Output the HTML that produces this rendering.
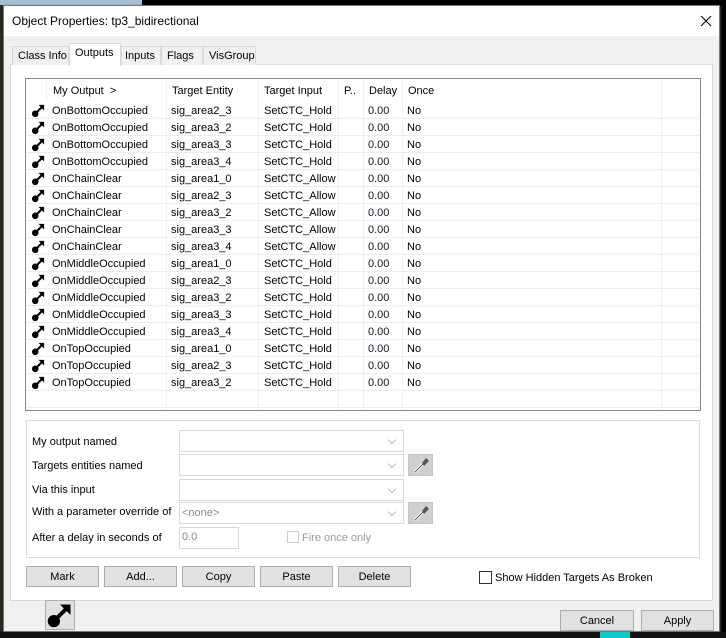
<!DOCTYPE html>
<html><head><meta charset="utf-8"><style>
*{box-sizing:border-box;margin:0;padding:0}
body{width:726px;height:638px;overflow:hidden;background:#000;position:relative;font-family:"Liberation Sans",sans-serif;font-size:11px;color:#000}
.a{position:absolute}
.t{position:absolute;white-space:nowrap}
.btn{position:absolute;background:#e1e1e1;border:1px solid #adadad;text-align:center;line-height:20px;font-size:11px}
.combo{position:absolute;left:179px;width:225px;height:22px;border:1px solid #d9d9d9;background:#fff}
.combo:after{content:"";position:absolute;right:8px;top:6px;width:5px;height:5px;border-right:1px solid #bbb;border-bottom:1px solid #bbb;transform:rotate(45deg)}
.row{position:absolute;left:26px;width:673px;height:17px;border-bottom:1px solid #ececec}
.row span{position:absolute;top:3px;white-space:nowrap}
.row .c1{left:26px}.row .c2{left:145px}.row .c3{left:238px}.row .c5{left:342px;color:#141428}.row .c6{left:381px}
.row svg{position:absolute;left:5px;top:1px}
.vl{position:absolute;width:1px;background:#f0f0f0}
</style></head><body>
<div class="a" style="left:0;top:0;width:142px;height:5px;background:#a6bfd2"></div>
<div class="a" style="left:0;top:5px;width:3px;height:633px;background:#2a2a20"></div>
<div class="a" style="left:3px;top:5px;width:717px;height:627px;background:#f0f0f0;border:1px solid #777;box-shadow:1px 1px 2px #333"></div>
<div class="a" style="left:4px;top:6px;width:715px;height:30px;background:#fff"></div>
<div class="t" style="left:12px;top:14px;font-size:12px">Object Properties: tp3_bidirectional</div>
<svg class="a" style="left:700px;top:15px" width="12" height="12"><path d="M1 1 L11 11 M11 1 L1 11" stroke="#000" stroke-width="1"/></svg>
<div class="a" style="left:10px;top:64px;width:703px;height:537px;background:#fff;border:1px solid #d9d9d9"></div>
<div class="a" style="left:12px;top:46px;width:57px;height:19px;border:1px solid #d9d9d9;border-bottom:none;background:#f0f0f0"></div><div class="t" style="left:18px;top:50px">Class Info</div>
<div class="a" style="left:69px;top:43px;width:52px;height:23px;border:1px solid #d9d9d9;border-bottom:none;background:#fff"></div><div class="t" style="left:75px;top:47px">Outputs</div>
<div class="a" style="left:121px;top:46px;width:40px;height:19px;border:1px solid #d9d9d9;border-bottom:none;background:#f0f0f0"></div><div class="t" style="left:125px;top:50px">Inputs</div>
<div class="a" style="left:161px;top:46px;width:42px;height:19px;border:1px solid #d9d9d9;border-bottom:none;background:#f0f0f0"></div><div class="t" style="left:167px;top:50px">Flags</div>
<div class="a" style="left:203px;top:46px;width:53px;height:19px;border:1px solid #d9d9d9;border-bottom:none;background:#f0f0f0"></div><div class="t" style="left:209px;top:50px">VisGroup</div>
<div class="a" style="left:25px;top:78px;width:676px;height:333px;border:1px solid #828790;background:#fff"></div>
<div class="vl" style="left:46px;top:80px;height:21px"></div>
<div class="vl" style="left:166px;top:80px;height:330px"></div>
<div class="vl" style="left:258px;top:80px;height:330px"></div>
<div class="vl" style="left:338px;top:80px;height:330px"></div>
<div class="vl" style="left:363px;top:80px;height:330px"></div>
<div class="vl" style="left:402px;top:80px;height:330px"></div>
<div class="vl" style="left:661px;top:80px;height:330px"></div>
<div class="t" style="left:53px;top:85px">My Output &nbsp;&gt;</div>
<div class="t" style="left:172px;top:85px">Target Entity</div>
<div class="t" style="left:264px;top:85px">Target Input</div>
<div class="t" style="left:344px;top:85px">P..</div>
<div class="t" style="left:369px;top:85px">Delay</div>
<div class="t" style="left:408px;top:85px">Once</div>
<svg width="0" height="0" style="position:absolute"><defs><symbol id="ic" viewBox="0 0 16 16"><circle cx="4.5" cy="11.5" r="3.5" fill="#000"/><path d="M5 11 L12 4" stroke="#000" stroke-width="2.2"/><path d="M8 2 H14 V8 Z" fill="#000"/></symbol></defs></svg>
<div class="row" style="top:102px"><svg width="15" height="15"><use href="#ic"/></svg><span class="c1">OnBottomOccupied</span><span class="c2">sig_area2_3</span><span class="c3">SetCTC_Hold</span><span class="c5">0.00</span><span class="c6">No</span></div>
<div class="row" style="top:119px"><svg width="15" height="15"><use href="#ic"/></svg><span class="c1">OnBottomOccupied</span><span class="c2">sig_area3_2</span><span class="c3">SetCTC_Hold</span><span class="c5">0.00</span><span class="c6">No</span></div>
<div class="row" style="top:136px"><svg width="15" height="15"><use href="#ic"/></svg><span class="c1">OnBottomOccupied</span><span class="c2">sig_area3_3</span><span class="c3">SetCTC_Hold</span><span class="c5">0.00</span><span class="c6">No</span></div>
<div class="row" style="top:153px"><svg width="15" height="15"><use href="#ic"/></svg><span class="c1">OnBottomOccupied</span><span class="c2">sig_area3_4</span><span class="c3">SetCTC_Hold</span><span class="c5">0.00</span><span class="c6">No</span></div>
<div class="row" style="top:170px"><svg width="15" height="15"><use href="#ic"/></svg><span class="c1">OnChainClear</span><span class="c2">sig_area1_0</span><span class="c3">SetCTC_Allow</span><span class="c5">0.00</span><span class="c6">No</span></div>
<div class="row" style="top:187px"><svg width="15" height="15"><use href="#ic"/></svg><span class="c1">OnChainClear</span><span class="c2">sig_area2_3</span><span class="c3">SetCTC_Allow</span><span class="c5">0.00</span><span class="c6">No</span></div>
<div class="row" style="top:204px"><svg width="15" height="15"><use href="#ic"/></svg><span class="c1">OnChainClear</span><span class="c2">sig_area3_2</span><span class="c3">SetCTC_Allow</span><span class="c5">0.00</span><span class="c6">No</span></div>
<div class="row" style="top:221px"><svg width="15" height="15"><use href="#ic"/></svg><span class="c1">OnChainClear</span><span class="c2">sig_area3_3</span><span class="c3">SetCTC_Allow</span><span class="c5">0.00</span><span class="c6">No</span></div>
<div class="row" style="top:238px"><svg width="15" height="15"><use href="#ic"/></svg><span class="c1">OnChainClear</span><span class="c2">sig_area3_4</span><span class="c3">SetCTC_Allow</span><span class="c5">0.00</span><span class="c6">No</span></div>
<div class="row" style="top:255px"><svg width="15" height="15"><use href="#ic"/></svg><span class="c1">OnMiddleOccupied</span><span class="c2">sig_area1_0</span><span class="c3">SetCTC_Hold</span><span class="c5">0.00</span><span class="c6">No</span></div>
<div class="row" style="top:272px"><svg width="15" height="15"><use href="#ic"/></svg><span class="c1">OnMiddleOccupied</span><span class="c2">sig_area2_3</span><span class="c3">SetCTC_Hold</span><span class="c5">0.00</span><span class="c6">No</span></div>
<div class="row" style="top:289px"><svg width="15" height="15"><use href="#ic"/></svg><span class="c1">OnMiddleOccupied</span><span class="c2">sig_area3_2</span><span class="c3">SetCTC_Hold</span><span class="c5">0.00</span><span class="c6">No</span></div>
<div class="row" style="top:306px"><svg width="15" height="15"><use href="#ic"/></svg><span class="c1">OnMiddleOccupied</span><span class="c2">sig_area3_3</span><span class="c3">SetCTC_Hold</span><span class="c5">0.00</span><span class="c6">No</span></div>
<div class="row" style="top:323px"><svg width="15" height="15"><use href="#ic"/></svg><span class="c1">OnMiddleOccupied</span><span class="c2">sig_area3_4</span><span class="c3">SetCTC_Hold</span><span class="c5">0.00</span><span class="c6">No</span></div>
<div class="row" style="top:340px"><svg width="15" height="15"><use href="#ic"/></svg><span class="c1">OnTopOccupied</span><span class="c2">sig_area1_0</span><span class="c3">SetCTC_Hold</span><span class="c5">0.00</span><span class="c6">No</span></div>
<div class="row" style="top:357px"><svg width="15" height="15"><use href="#ic"/></svg><span class="c1">OnTopOccupied</span><span class="c2">sig_area2_3</span><span class="c3">SetCTC_Hold</span><span class="c5">0.00</span><span class="c6">No</span></div>
<div class="row" style="top:374px"><svg width="15" height="15"><use href="#ic"/></svg><span class="c1">OnTopOccupied</span><span class="c2">sig_area3_2</span><span class="c3">SetCTC_Hold</span><span class="c5">0.00</span><span class="c6">No</span></div>
<div class="row" style="top:391px"></div>
<div class="a" style="left:26px;top:420px;width:674px;height:138px;border:1px solid #dcdcdc"></div>
<div class="t" style="left:32px;top:436px">My output named</div>
<div class="t" style="left:32px;top:460px">Targets entities named</div>
<div class="t" style="left:32px;top:484px">Via this input</div>
<div class="t" style="left:32px;top:506px">With a parameter override of</div>
<div class="t" style="left:32px;top:532px">After a delay in seconds of</div>
<div class="combo" style="top:430px"></div>
<div class="combo" style="top:454px"></div>
<div class="combo" style="top:479px"></div>
<div class="combo" style="top:502px"><span class="t" style="left:2px;top:4px;color:#888">&lt;none&gt;</span></div>
<svg class="a" style="left:408px;top:454px" width="25" height="22"><rect x="0.5" y="0.5" width="24" height="21" fill="#cfcfcf" stroke="#c4c4c4"/><path d="M7 18 L15 10" stroke="#fff" stroke-width="3"/><path d="M7 18 L15 10" stroke="#555" stroke-width="1" fill="none"/><path d="M14 9 L18 4 L21 7 L16 12 Z" fill="#555"/></svg>
<svg class="a" style="left:408px;top:502px" width="25" height="22"><rect x="0.5" y="0.5" width="24" height="21" fill="#cfcfcf" stroke="#c4c4c4"/><path d="M7 18 L15 10" stroke="#fff" stroke-width="3"/><path d="M7 18 L15 10" stroke="#555" stroke-width="1" fill="none"/><path d="M14 9 L18 4 L21 7 L16 12 Z" fill="#555"/></svg>
<div class="a" style="left:179px;top:527px;width:60px;height:22px;border:1px solid #d9d9d9;background:#fff"></div>
<div class="t" style="left:182px;top:531px;color:#888">0.0</div>
<div class="a" style="left:287px;top:531px;width:12px;height:12px;border:1px solid #ccc;background:#fff"></div>
<div class="t" style="left:302px;top:532px;color:#999">Fire once only</div>
<div class="btn" style="left:26px;top:566px;width:73px;height:21px">Mark</div>
<div class="btn" style="left:104px;top:566px;width:73px;height:21px">Add...</div>
<div class="btn" style="left:182px;top:566px;width:73px;height:21px">Copy</div>
<div class="btn" style="left:260px;top:566px;width:73px;height:21px">Paste</div>
<div class="btn" style="left:338px;top:566px;width:73px;height:21px">Delete</div>
<div class="a" style="left:479px;top:571px;width:13px;height:13px;border:1px solid #333;background:#fff"></div>
<div class="t" style="left:495px;top:572px">Show Hidden Targets As Broken</div>
<div class="a" style="left:45px;top:600px;width:30px;height:30px;background:#e1e1e1;border:1px solid #adadad"></div>
<svg class="a" style="left:46px;top:601px" width="28" height="28" viewBox="0 0 16 16"><use href="#ic"/></svg>
<div class="btn" style="left:560px;top:610px;width:74px;height:21px">Cancel</div>
<div class="btn" style="left:641px;top:610px;width:73px;height:21px">Apply</div>
<div class="a" style="left:0;top:632px;width:726px;height:6px;background:#111"></div>
<div class="a" style="left:600px;top:632px;width:30px;height:6px;background:#10c8c8"></div>
</body></html>
